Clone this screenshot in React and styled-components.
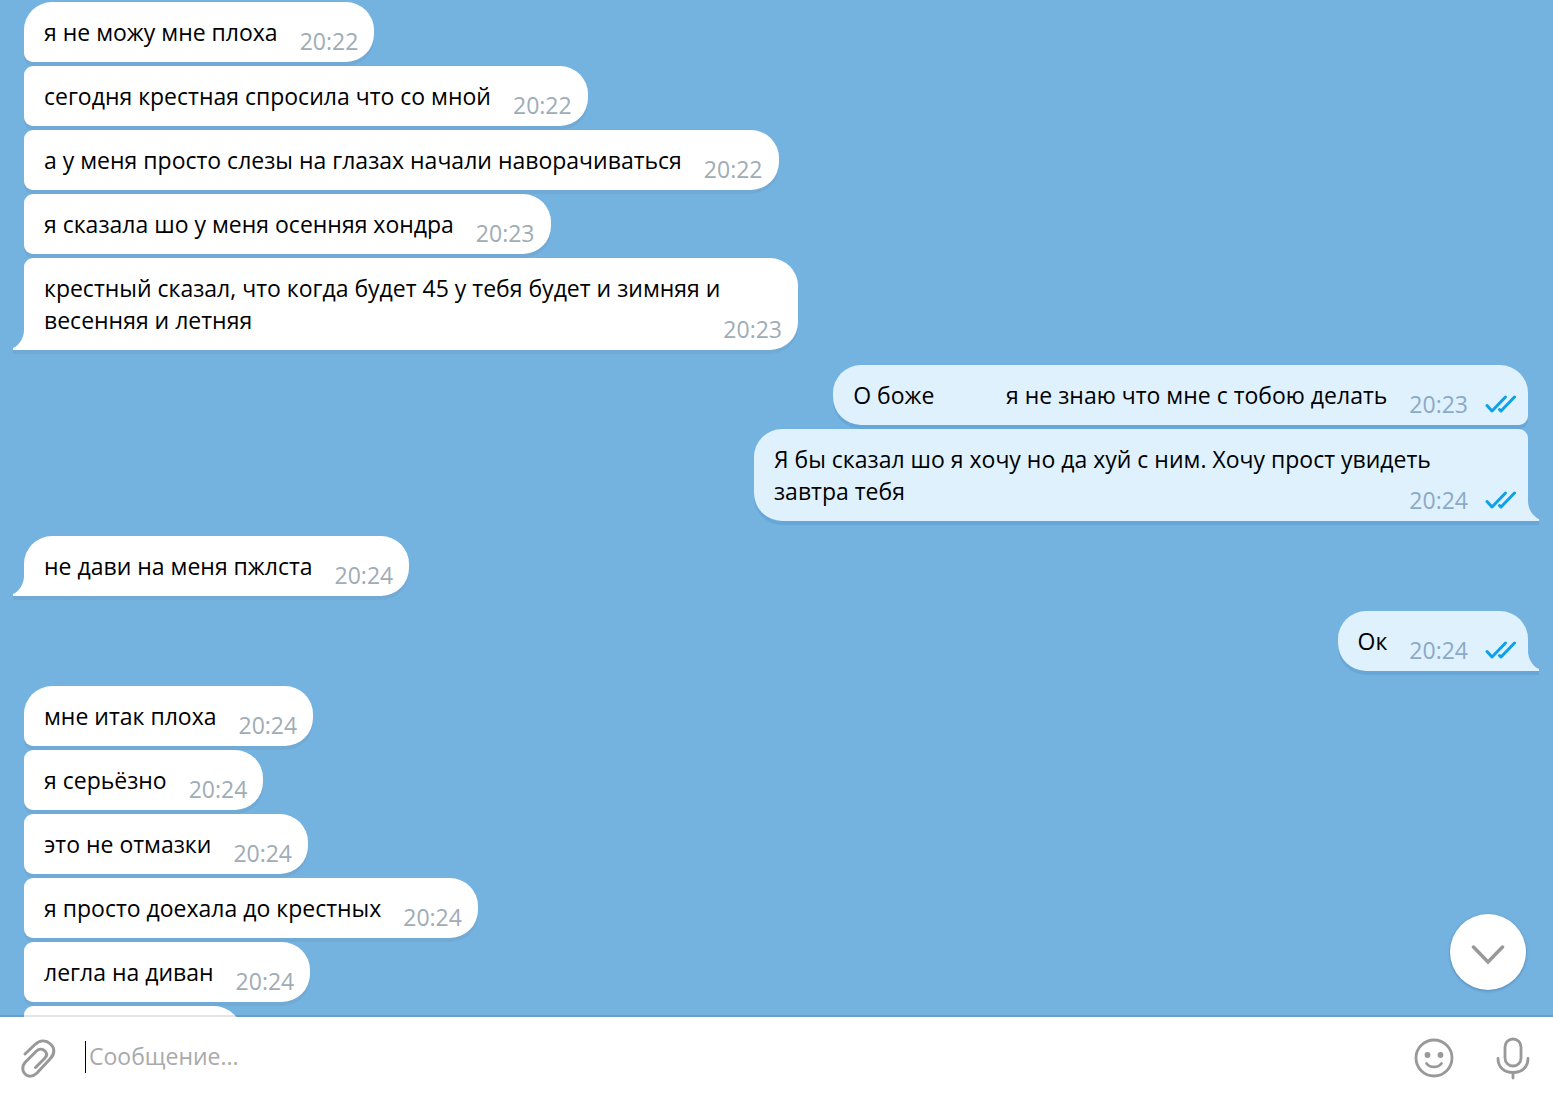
import React from 'react';
import styled, { createGlobalStyle } from 'styled-components';

const GlobalStyle = createGlobalStyle`
  * {
    box-sizing: border-box;
  }
  body {
    margin: 0;
    font-family: 'Open Sans', 'Noto Sans', sans-serif;
    font-size: 23px;
    line-height: 32px;
    color: #000;
  }
`;

const Window = styled.div`
  display: flex;
  flex-direction: column;
  height: 100vh;
  background: #74b2e0;
`;

const HistoryArea = styled.main`
  position: relative;
  display: flex;
  flex: 1;
  min-height: 0;
`;

const History = styled.div`
  display: flex;
  flex: 1;
  flex-direction: column;
  gap: 15px;
  padding: 2px 25px 0 24px;
  overflow: hidden;
`;

const Group = styled.div`
  display: flex;
  flex-direction: column;
  flex-shrink: 0;
  gap: 4px;
  align-items: ${props => (props.$out ? 'flex-end' : 'flex-start')};
`;

const corners = ({ $out, $first, $last }) => {
  const top = $first ? '28px' : '9px';
  const bottom = $last ? '0' : '9px';
  return $out
    ? `28px ${top} ${bottom} 28px`
    : `${top} 28px 28px ${bottom}`;
};

const Bubble = styled.div`
  position: relative;
  min-width: ${props => (props.$empty ? '218px' : '0')};
  min-height: 60px;
  max-width: 774px;
  padding: 14px 20px;
  border-radius: ${corners};
  background: ${props => (props.$out ? '#def1fd' : '#fff')};
  box-shadow: 0 4px 0 ${props => (props.$out ? '#67a7d8' : '#72aad6')};
  white-space: pre-wrap;
`;

const Tail = styled.svg`
  position: absolute;
  bottom: -4px;
  ${props => (props.$out ? 'right: -11px;' : 'left: -11px;')}
  width: 12px;
  height: 24px;
  transform: ${props => (props.$out ? 'scaleX(-1)' : 'none')};
`;

const Meta = styled.span`
  display: flex;
  float: right;
  gap: 16px;
  align-items: center;
  margin: 9px ${props => (props.$out ? '-8px' : '-4px')} -9px 22px;
  color: ${props => (props.$out ? '#8aaac6' : '#a0acb6')};
`;

const ScrollDown = styled.button`
  position: absolute;
  right: 27px;
  bottom: 27px;
  display: flex;
  align-items: center;
  justify-content: center;
  width: 76px;
  height: 76px;
  padding: 6px 0 0;
  border: 0;
  border-radius: 50%;
  background: #fff;
  box-shadow: 0 1px 3px rgba(0, 40, 80, 0.3);
`;

const Composer = styled.form`
  position: relative;
  display: flex;
  align-items: center;
  height: 80px;
  padding: 0 16px 0 15px;
  background: #fff;
  box-shadow: 0 -2px 0 rgba(0, 0, 0, 0.1);
`;

const IconButton = styled.button`
  display: flex;
  align-items: center;
  justify-content: center;
  width: 48px;
  height: 48px;
  padding: 2px 0 0;
  border: 0;
  background: none;
`;

const Caret = styled.span`
  width: 1px;
  height: 32px;
  margin-left: 22px;
  background: #000;
`;

const Field = styled.input`
  flex: 1;
  min-width: 0;
  height: 34px;
  margin-left: 3px;
  padding: 0 0 2px;
  border: 0;
  outline: none;
  background: none;
  font: inherit;
  &::placeholder {
    color: #aaa;
    opacity: 1;
  }
`;

const Tools = styled.div`
  display: flex;
  gap: 31px;
`;

const Checks = () => (
  <svg width="32" height="20" viewBox="0 0 32 20" fill="none" stroke="#0ea0ea" strokeWidth="3" strokeLinecap="round" strokeLinejoin="round">
    <path d="M3 11.5 8 17 21.5 3" />
    <path d="M15.5 15.5 17 17 30.5 3" />
  </svg>
);

const BubbleTail = ({ out }) => (
  <Tail $out={out} viewBox="0 0 12 24">
    <path d="M0 20H12V24H0Z" fill={out ? '#67a7d8' : '#72aad6'} />
    <path d="M12 0H11C11 7 7 15 0 18V20H12Z" fill={out ? '#def1fd' : '#fff'} />
  </Tail>
);

const groups = [
  {
    messages: [
      { text: 'я не можу мне плоха', time: '20:22' },
      { text: 'сегодня крестная спросила что со мной', time: '20:22' },
      { text: 'а у меня просто слезы на глазах начали наворачиваться', time: '20:22' },
      { text: 'я сказала шо у меня осенняя хондра', time: '20:23' },
      {
        text: 'крестный сказал, что когда будет 45 у тебя будет и зимняя и весенняя и летняя',
        time: '20:23'
      }
    ]
  },
  {
    out: true,
    messages: [
      { text: 'О боже            я не знаю что мне с тобою делать', time: '20:23' },
      {
        text: 'Я бы сказал шо я хочу но да хуй с ним. Хочу прост увидеть завтра тебя',
        time: '20:24'
      }
    ]
  },
  { messages: [{ text: 'не дави на меня пжлста', time: '20:24' }] },
  { out: true, messages: [{ text: 'Ок', time: '20:24' }] },
  {
    messages: [
      { text: 'мне итак плоха', time: '20:24' },
      { text: 'я серьёзно', time: '20:24' },
      { text: 'это не отмазки', time: '20:24' },
      { text: 'я просто доехала до крестных', time: '20:24' },
      { text: 'легла на диван', time: '20:24' },
      {}
    ]
  }
];

const Message = ({ text, time, out, first, last }) => (
  <Bubble $out={out} $first={first} $last={last} $empty={!text}>
    {text}
    {time && (
      <Meta $out={out}>
        <time>{time}</time>
        {out && <Checks />}
      </Meta>
    )}
    {last && <BubbleTail out={out} />}
  </Bubble>
);

const App = () => (
  <Window>
    <GlobalStyle />
    <HistoryArea>
      <History>
        {groups.map(({ out, messages }, g) => (
          <Group key={g} $out={out}>
            {messages.map((message, i) => (
              <Message
                key={i}
                {...message}
                out={out}
                first={i === 0}
                last={i === messages.length - 1}
              />
            ))}
          </Group>
        ))}
      </History>
      <ScrollDown type="button" aria-label="Вниз">
        <svg width="36" height="20" viewBox="0 0 36 20" fill="none" stroke="#999" strokeWidth="3.500" strokeLinecap="round">
          <path d="M3.500 2 18 17 32.500 2" />
        </svg>
      </ScrollDown>
    </HistoryArea>
    <Composer>
      <IconButton type="button" aria-label="Прикрепить">
        <svg width="36" height="42" viewBox="1 0 36 42" fill="none" stroke="#999" strokeWidth="3" strokeLinecap="round">
          <path d="M5 17 15 7.500C20 3 26 3 30.500 7C35 11 35 17 30 22L17 36C13 40 8 40 5 37C2 34 2 29 5 25.500L16.500 14C19 11.500 22.500 11.500 25 14C27.500 16.500 27 19 24.500 21.500L15.500 30.500" />
        </svg>
      </IconButton>
      <Caret />
      <Field aria-label="Сообщение" placeholder="Сообщение..." />
      <Tools>
        <IconButton type="button" aria-label="Эмодзи">
          <svg width="40" height="40" viewBox="0 0 40 40" fill="none" stroke="#999" strokeWidth="2.800" strokeLinecap="round">
            <circle cx="20" cy="20" r="18" />
            <circle cx="13.500" cy="17" r="2.900" fill="#999" stroke="none" />
            <circle cx="26.500" cy="17" r="2.900" fill="#999" stroke="none" />
            <path d="M12.500 25.500C16 30 24 30 27.500 25.500" />
          </svg>
        </IconButton>
        <IconButton type="button" aria-label="Голосовое сообщение">
          <svg width="34" height="44" viewBox="0 0 34 44" fill="none" stroke="#999" strokeWidth="2.800" strokeLinecap="round">
            <rect x="9" y="3" width="16" height="27" rx="8" />
            <path d="M2 22.500C2 31.500 8.500 36.500 17 36.500S32 31.500 32 22.500M17 36.500V42" />
          </svg>
        </IconButton>
      </Tools>
    </Composer>
  </Window>
);

export default App;
